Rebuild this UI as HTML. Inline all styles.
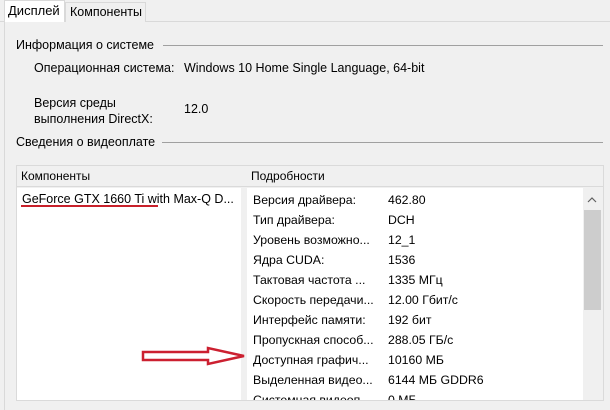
<!DOCTYPE html>
<html><head><meta charset="utf-8"><style>
*{margin:0;padding:0;box-sizing:border-box}
body{width:610px;height:410px;overflow:hidden;background:#f0f0f0;font-family:"Liberation Sans","DejaVu Sans",sans-serif;font-size:12px;color:#000;position:relative}
.a{position:absolute;white-space:nowrap}
.line{position:absolute;height:1px;background:#a0a0a0}
</style></head><body>
<div class="a" style="left:0;top:21px;width:610px;height:1px;background:#d9d9d9"></div>
<div class="a" style="left:4px;top:21px;width:1px;height:389px;background:#d9d9d9"></div>
<div class="a" style="left:4px;top:0;width:61px;height:22px;background:#fff;border:1px solid #d9d9d9;border-bottom:none"></div>
<div class="a" style="left:8px;top:3px;font-size:13px">Дисплей</div>
<div class="a" style="left:65px;top:2px;width:81px;height:20px;background:#f0f0f0;border:1px solid #d9d9d9;border-bottom:none"></div>
<div class="a" style="left:70px;top:5px;font-size:12.5px">Компоненты</div>

<div class="a" style="left:16px;top:38px;font-size:12.5px">Информация о системе</div>
<div class="line" style="left:163px;top:45px;width:440px"></div>
<div class="a" style="left:34px;top:61px;font-size:12.5px">Операционная система:</div>
<div class="a" style="left:184px;top:61px;font-size:12.5px">Windows 10 Home Single Language, 64-bit</div>
<div class="a" style="left:34px;top:95px;font-size:12.5px;line-height:16px">Версия среды<br>выполнения DirectX:</div>
<div class="a" style="left:184px;top:102px;font-size:12.5px">12.0</div>
<div class="a" style="left:16px;top:135px;font-size:12.5px">Сведения о видеоплате</div>
<div class="line" style="left:162px;top:142px;width:441px"></div>

<div class="a" style="left:16px;top:165px;width:588px;height:236px;border:1px solid #dadada;background:#f0f0f0"></div>
<div class="a" style="left:17px;top:166px;width:586px;height:21px;background:#f0f0f0;border-bottom:1px solid #dadada"></div>
<div class="a" style="left:21px;top:169px">Компоненты</div>
<div class="a" style="left:251px;top:169px">Подробности</div>
<div class="a" style="left:17px;top:188px;width:224px;height:212px;background:#fff"></div>
<div class="a" style="left:247px;top:188px;width:336px;height:212px;background:#fff;overflow:hidden">
<div style="position:absolute;left:6px;top:2px;line-height:20px;font-size:12.3px">Версия драйвера:<br>Тип драйвера:<br>Уровень возможно...<br>Ядра CUDA:<br>Тактовая частота ...<br>Скорость передачи...<br>Интерфейс памяти:<br>Пропускная способ...<br>Доступная графич...<br>Выделенная видео...<br>Системная видеоп...</div>
<div style="position:absolute;left:141px;top:2px;line-height:20px;font-size:12.3px">462.80<br>DCH<br>12_1<br>1536<br>1335 МГц<br>12.00 Гбит/с<br>192 бит<br>288.05 ГБ/с<br>10160 МБ<br>6144 МБ GDDR6<br>0 МБ</div>
</div>
<div class="a" style="left:583px;top:188px;width:19px;height:212px;background:#f0f0f0"></div>
<div class="a" style="left:584px;top:210px;width:17px;height:100px;background:#cdcdcd"></div>
<svg class="a" style="left:0;top:0" width="610" height="410">
<path d="M588 202 L592 198 L596 202" fill="none" stroke="#606060" stroke-width="1.2"/>
<path d="M143 352 L208 352 L208 348 L244 356 L208 364 L208 360 L143 360 Z" fill="none" stroke="#cc2030" stroke-width="2.5"/>
</svg>
<div class="a" style="left:22px;top:192px;font-size:12.5px">GeForce GTX 1660 Ti with Max-Q D...</div>
<div class="a" style="left:21px;top:205px;width:137px;height:2px;background:#c8202a"></div>
<div class="a" style="left:510px;top:367px;font-size:26px;font-weight:bold;color:rgba(255,255,255,0.75)">Avito</div>
</body></html>
